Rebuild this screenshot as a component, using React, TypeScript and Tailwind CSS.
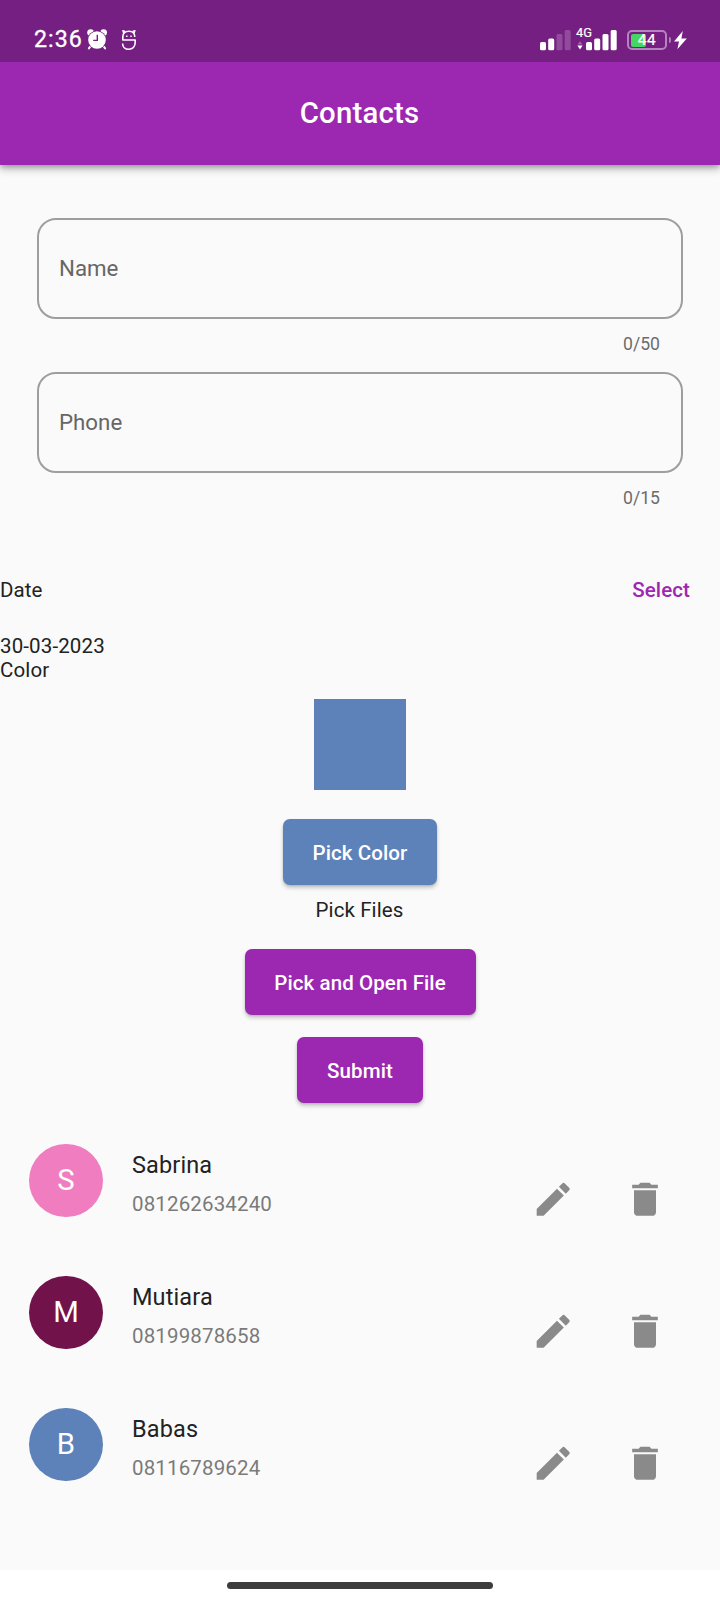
import React from "react";

type Contact = { initial: string; name: string; phone: string; avatar: string };

const contacts: Contact[] = [
  { initial: "S", name: "Sabrina", phone: "081262634240", avatar: "bg-[#ef7dc0]" },
  { initial: "M", name: "Mutiara", phone: "08199878658", avatar: "bg-[#72124b]" },
  { initial: "B", name: "Babas", phone: "08116789624", avatar: "bg-[#5d82b9]" },
];

const body = "text-[20.53px] leading-[24px]";

function AlarmIcon() {
  return (
    <svg width="22" height="24" viewBox="0 0 22 24" fill="#fff">
      <circle cx="4.6" cy="4.6" r="3.4" />
      <circle cx="17.6" cy="4.6" r="3.4" />
      <path d="M4.2 18.6 2.9 20.4M17.8 18.6l1.3 1.8" stroke="#fff" strokeWidth="2" strokeLinecap="round" />
      <circle cx="11" cy="12" r="9.4" fill="#751f82" />
      <circle cx="11" cy="12" r="8.8" />
      <path d="M11.3 6.8v5.6H7.2" stroke="#751f82" strokeWidth="1.4" fill="none" />
    </svg>
  );
}

function MascotIcon() {
  return (
    <svg width="18" height="24" viewBox="0 0 18 24" fill="none" stroke="#fff" strokeWidth="1.6" strokeLinejoin="round">
      <path d="M14.8 9C14.8 5.2 12.6 3.2 8.9 3.2S2.8 5.2 2.8 9v3h12.4v2.6c0 4-2.6 6.6-6.4 6.6s-6.2-2.4-6.2-5.8" />
      <path d="M3.6 5.2 2.8 2.6l2.4.8M14.2 5.2l.8-2.6-2.4.8" strokeWidth="1.2" />
      <path d="M6.1 8.2h1.4M10.3 8.2h1.4" strokeWidth="1.5" />
    </svg>
  );
}

function SignalBars({ faded }: { faded: boolean }) {
  const dim = faded ? 0.2 : 1;
  return (
    <svg width="31" height="24" viewBox="0 0 31 24" fill="#fff">
      <rect x="0" y="14" width="6" height="8.2" rx="1.5" />
      <rect x="8.2" y="10.6" width="6" height="11.6" rx="1.5" />
      <rect x="16.5" y="6" width="6" height="16.2" rx="1.5" opacity={dim} />
      <rect x="24.7" y="2" width="6" height="20.2" rx="1.5" opacity={dim} />
    </svg>
  );
}

function StatusBar() {
  return (
    <div className="flex h-[62px] items-start bg-[#751f82] pt-[28px] pl-[34px] text-white">
      <div className="w-[52px] text-[23.2px] leading-[23px] tracking-[1px] [-webkit-text-stroke:0.3px_#fff]">2:36</div>
      <AlarmIcon />
      <div className="ml-[12px]">
        <MascotIcon />
      </div>
      <div className="ml-[402px] flex">
        <SignalBars faded />
        <div className="relative ml-[6px] w-[40px] pl-[9px]">
          <span className="absolute -top-[2px] -left-px text-[12.8px] leading-[14px] [-webkit-text-stroke:0.2px_#fff]">4G</span>
          <svg className="absolute top-[13px] left-0" width="6" height="9" viewBox="0 0 6 9" fill="#fff">
            <path d="M3 .3 5.5 3.4H.5z" opacity=".3" />
            <path d="M.4 4.6h5.2L3 8.4z" />
          </svg>
          <SignalBars faded={false} />
        </div>
        <div className="relative mt-[2px] ml-[10px] flex h-[20px] w-[40px] items-center justify-center rounded-[5px] border-2 border-[#b583bd]">
          <span className="absolute top-[1.5px] left-[2px] h-[13px] w-[15px] rounded-[2px] bg-[#45d562]" />
          <span className="relative text-[15.4px] leading-[16px] tracking-[0.6px] [-webkit-text-stroke:0.2px_#fff]">44</span>
        </div>
        <div className="mt-[9px] ml-[2px] h-[6px] w-[2px] rounded-r-full bg-[#b07fb8]" />
        <svg className="ml-[2px]" width="15" height="24" viewBox="0 0 15 24" fill="#fff">
          <path d="M9.8 3 1 13.4h5L4.4 21.2 13.8 10.4H8.4z" />
        </svg>
      </div>
    </div>
  );
}

function Field({ label, max }: { label: string; max: number }) {
  return (
    <div className="mx-[37px]">
      <div className="flex h-[101px] items-center rounded-[19px] border-2 border-[#9e9e9e] pl-[20px] text-[22.3px] text-[#666]">
        {label}
      </div>
      <div className="h-[53px] pr-[23px] text-right text-[17.6px] leading-[50px] text-[#6c6c6c]">
        0/{max}
      </div>
    </div>
  );
}

function Button({ color, width, children }: { color: string; width: string; children: React.ReactNode }) {
  return (
    <button
      className={`${body} ${color} ${width} flex h-[66px] items-center justify-center rounded-[7px] pt-[2px] font-medium tracking-[0.09px] whitespace-nowrap text-white shadow-[0_3px_4px_rgba(0,0,0,0.2),0_1px_2px_rgba(0,0,0,0.12)]`}
    >
      {children}
    </button>
  );
}

function ContactRow({ contact }: { contact: Contact }) {
  return (
    <div className="flex h-[132px] items-start pr-[53px] pl-[29.33px]">
      <div className={`${contact.avatar} flex size-[73.33px] items-center justify-center rounded-full pt-px text-[29.3px] text-white`}>
        {contact.initial}
      </div>
      <div className="ml-[29.33px] flex-1 pt-[7px]">
        <div className="text-[23.47px] leading-[28px] tracking-[0.14px] text-[#222]">{contact.name}</div>
        <div className={`${body} mt-[13px] tracking-[0.14px] text-[#7a7a7a]`}>{contact.phone}</div>
      </div>
      <div className="mt-[33px] flex gap-[48px]">
        <svg width="44" height="44" viewBox="-0.1 -0.2 24 24" fill="#8a8a8a">
          <path d="M3 17.25V21h3.75L17.81 9.94l-3.75-3.75L3 17.25zM20.71 7.04c.39-.39.39-1.02 0-1.41l-2.34-2.34c-.39-.39-1.02-.39-1.41 0l-1.83 1.83 3.75 3.75 1.83-1.83z" />
        </svg>
        <svg width="44" height="44" viewBox="0 -0.2 24 24" fill="#8a8a8a">
          <path d="M6 19c0 1.1.9 2 2 2h8c1.1 0 2-.9 2-2V7H6v12zM19 4h-3.5l-1-1h-5l-1 1H5v2h14V4z" />
        </svg>
      </div>
    </div>
  );
}

export default function App() {
  return (
    <div className="flex h-[1600px] w-[720px] flex-col overflow-hidden bg-[#fafafa] font-[Roboto,sans-serif] text-[#222]">
      <header className="shadow-[0_4px_8px_rgba(0,0,0,0.28),0_2px_4px_rgba(0,0,0,0.15)]">
        <StatusBar />
        <h1 className="flex h-[103px] items-center justify-center bg-[#9c27b0] pt-px pr-px text-[29.33px] font-medium tracking-[0.2px] text-white">
          Contacts
        </h1>
      </header>

      <main className="flex flex-1 flex-col pt-[53px]">
        <Field label="Name" max={50} />
        <Field label="Phone" max={15} />

        <div className={`${body} mt-[19px] flex h-[89px] items-center justify-between pr-[30px] tracking-[0.09px]`}>
          <span>Date</span>
          <span className="font-medium text-[#9c27b0]">Select</span>
        </div>
        <div className={`${body} tracking-[0.12px]`}>30-03-2023</div>
        <div className={`${body} tracking-[0.12px]`}>Color</div>

        <div className="mt-[17px] flex flex-col items-center">
          <div className="h-[91px] w-[92px] bg-[#5d82b9]" />
          <div className="mt-[29px]">
            <Button color="bg-[#5d82b9]" width="w-[154px]">Pick Color</Button>
          </div>
          <div className={`${body} mt-[13px] pr-px tracking-[0.09px]`}>Pick Files</div>
          <div className="mt-[27px]">
            <Button color="bg-[#9c27b0]" width="w-[231px]">Pick and Open File</Button>
          </div>
          <div className="mt-[22px]">
            <Button color="bg-[#9c27b0]" width="w-[126px]">Submit</Button>
          </div>
        </div>

        <div className="mt-[41px]">
          {contacts.map((c) => (
            <ContactRow key={c.name} contact={c} />
          ))}
        </div>
      </main>

      <footer className="flex h-[30px] shrink-0 justify-center bg-white pt-[12px]">
        <div className="h-[7px] w-[266px] rounded-full bg-[#3d3d3d]" />
      </footer>
    </div>
  );
}
